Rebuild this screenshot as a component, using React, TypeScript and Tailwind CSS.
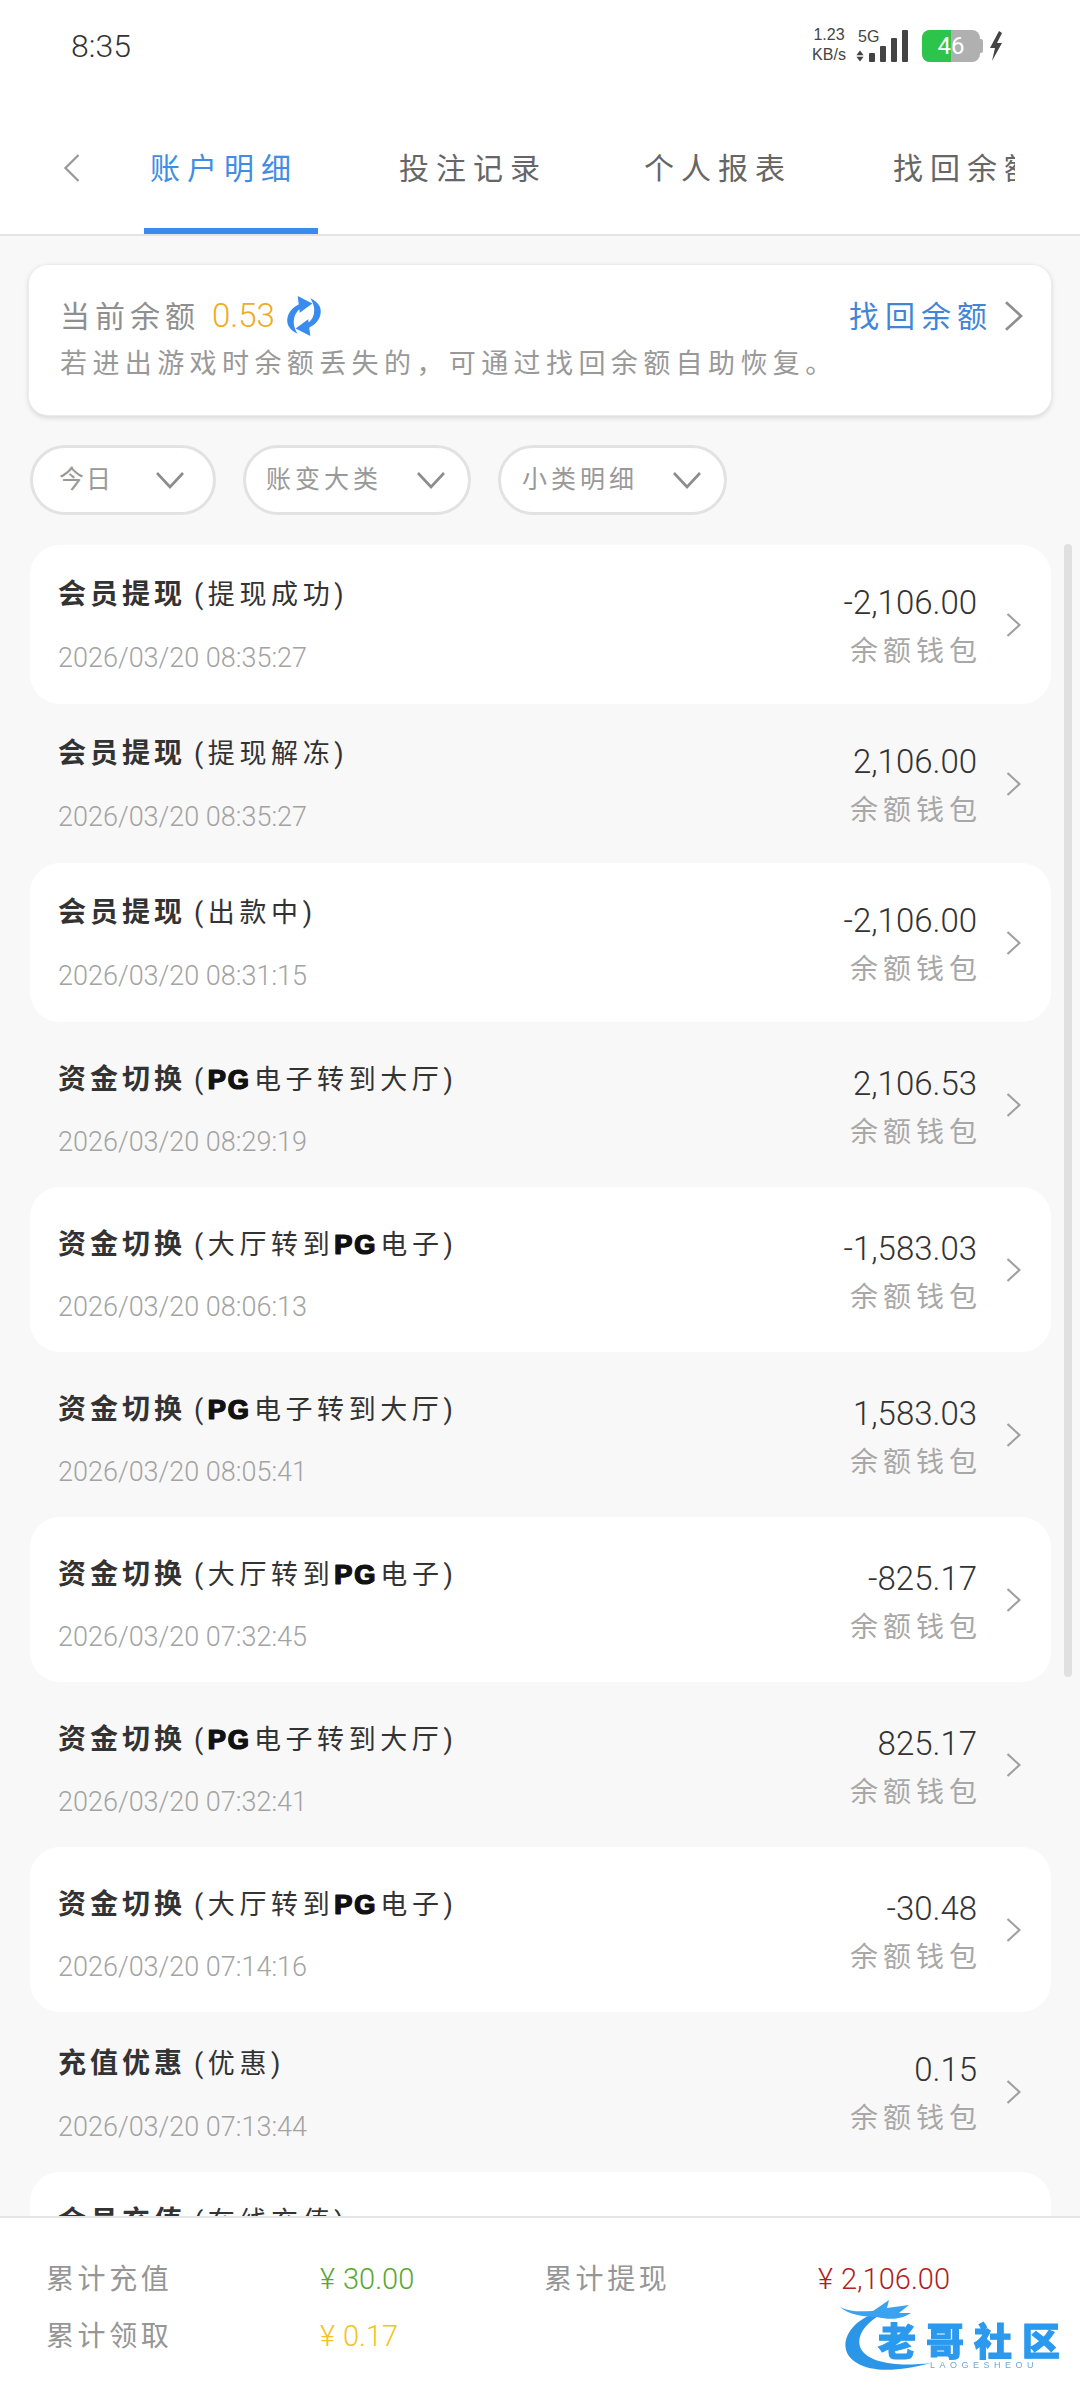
import React from "react";

const CJK = "font-['Roboto','Noto_Sans_CJK_SC',sans-serif]";

function PG() {
  return <span className="font-['Liberation_Sans',sans-serif] font-bold text-[#111] text-[27px] tracking-[2px] [-webkit-text-stroke:1.2px_#111] [text-shadow:-1px_0_#35d5e0,1px_0_#e23a9a]">PG</span>;
}

function Chevron({ className }: { className: string }) {
  return (
    <svg viewBox="0 0 15 24" className={className} fill="none" stroke="currentColor" strokeWidth="2.2">
      <path d="M1.5 1 L13.5 12 L1.5 23" strokeLinejoin="miter" />
    </svg>
  );
}

function Down() {
  return (
    <svg viewBox="0 0 28 17" className="w-[28px] h-[17px] text-[#8c8c8c]" fill="none" stroke="currentColor" strokeWidth="2.6">
      <path d="M1 1 L14 15 L27 1" />
    </svg>
  );
}

type Row = {
  title: string;
  sub: React.ReactNode;
  date?: string;
  amount?: string;
  white: boolean;
  h: string;
  titlePad: string;
  datePad: string;
  amountPad: string;
};

const h159 = { h: "h-[159px]", titlePad: "pt-[30px]", datePad: "mt-[23px]", amountPad: "pt-[38px]" };
const h165 = { h: "h-[165px]", titlePad: "pt-[38px]", datePad: "mt-[22px]", amountPad: "pt-[42px]" };
const h160 = { h: "h-[160px]", titlePad: "pt-[32px]", datePad: "mt-[23px]", amountPad: "pt-[38px]" };
const h212 = { h: "h-[212px]", titlePad: "pt-[30px]", datePad: "mt-[23px]", amountPad: "pt-[38px]" };

const hallToPg = (
  <>(<PG /><span className="ml-[3px]">电子转到大厅</span>)</>
);
const pgToHall = (
  <>(大厅转到<PG /><span className="ml-[3px]">电子</span>)</>
);

const rows: Row[] = [
  { title: "会员提现", sub: "(提现成功)", date: "2026/03/20 08:35:27", amount: "-2,106.00", white: true, ...h159 },
  { title: "会员提现", sub: "(提现解冻)", date: "2026/03/20 08:35:27", amount: "2,106.00", white: false, ...h159 },
  { title: "会员提现", sub: "(出款中)", date: "2026/03/20 08:31:15", amount: "-2,106.00", white: true, ...h159 },
  { title: "资金切换", sub: hallToPg, date: "2026/03/20 08:29:19", amount: "2,106.53", white: false, ...h165 },
  { title: "资金切换", sub: pgToHall, date: "2026/03/20 08:06:13", amount: "-1,583.03", white: true, ...h165 },
  { title: "资金切换", sub: hallToPg, date: "2026/03/20 08:05:41", amount: "1,583.03", white: false, ...h165 },
  { title: "资金切换", sub: pgToHall, date: "2026/03/20 07:32:45", amount: "-825.17", white: true, ...h165 },
  { title: "资金切换", sub: hallToPg, date: "2026/03/20 07:32:41", amount: "825.17", white: false, ...h165 },
  { title: "资金切换", sub: pgToHall, date: "2026/03/20 07:14:16", amount: "-30.48", white: true, ...h165 },
  { title: "充值优惠", sub: "(优惠)", date: "2026/03/20 07:13:44", amount: "0.15", white: false, ...h160 },
  { title: "会员充值", sub: "(在线充值)", white: true, ...h212 },
];

function ListRow({ r }: { r: Row }) {
  return (
    <div className={`${r.h} shrink-0 rounded-[30px] flex pl-[28px] pr-[30px] ${r.white ? "bg-white" : ""}`}>
      <div className={`flex-1 ${r.titlePad}`}>
        <div className="h-[40px] flex items-center whitespace-nowrap text-[#333]">
          <span className="font-bold text-[28px] tracking-[4px]">{r.title}</span>
          <span className="text-[27px] tracking-[4.6px] ml-[8px]">{r.sub}</span>
        </div>
        {r.date && (
          <div className={`${r.datePad} h-[40px] leading-[40px] text-[27px] font-light text-[#a3a3a3]`}>{r.date}</div>
        )}
      </div>
      {r.amount && (
        <>
          <div className={`flex flex-col items-end ${r.amountPad}`}>
            <div className="h-[40px] leading-[40px] text-[33px] font-light text-[#333]">{r.amount}</div>
            <div className="h-[40px] leading-[40px] mt-[9px] text-[28px] tracking-[5px] -mr-[5px] text-[#a8a8a8]">余额钱包</div>
          </div>
          <div className="ml-[29px] flex items-center">
            <Chevron className="w-[15px] h-[24px] text-[#a0a0a0]" />
          </div>
        </>
      )}
    </div>
  );
}

function Filter({ label, w, track, pad, gap }: { label: string; w: string; track: string; pad: string; gap: string }) {
  return (
    <div className={`${w} h-[70px] shrink-0 rounded-[35px] bg-white border-[3px] border-[#e2e2e2] flex items-center ${pad} ${gap}`}>
      <span className={`text-[25px] text-[#999] ${track} whitespace-nowrap`}>{label}</span>
      <Down />
    </div>
  );
}

function Logo() {
  return (
    <div className="absolute left-[839px] top-[2299px] w-[225px] h-[74px] pointer-events-none blur-[0.5px]">
      <svg viewBox="0 0 225 74" className="absolute inset-0 w-full h-full">
        <path d="M42 12 C6 22 -4 52 18 64 C34 74 62 72 92 64 C58 68 30 64 22 50 C16 38 26 24 44 14 Z" fill="#2b95e8" />
        <path d="M1 8 C14 14 24 12 34 12 L50 1 L48 9 L70 6 L60 14 L72 14 C60 22 48 20 38 18 C26 18 10 16 1 8 Z" fill="#3aa2ee" />
      </svg>
      <div className="absolute left-[39px] top-[24px] text-[38px] leading-[38px] font-black whitespace-nowrap tracking-[10px] text-[#2a99ee] [-webkit-text-stroke:1px_#2a99ee]">老哥社区</div>
      <div className="absolute left-[91px] top-[61px] text-[9px] leading-[11px] tracking-[4.5px] text-[#6aa9d8] whitespace-nowrap font-['Liberation_Sans',sans-serif]">LAOGESHEOU</div>
    </div>
  );
}

export default function App() {
  return (
    <div className={`relative w-[1080px] h-[2400px] overflow-hidden bg-[#f8f8f8] flex flex-col ${CJK}`}>
      {/* status + tab header */}
      <header className="bg-white h-[236px] shrink-0 border-b-2 border-[#e4e4e4] flex flex-col">
        <div className="h-[92px] flex items-center justify-between pl-[71px] pr-[77px] shrink-0">
          <span className="text-[32px] font-light text-[#333]">8:35</span>
          <div className="flex items-center h-[36px] -mt-[2px]">
            <div className="flex flex-col items-center text-[16px] leading-[20px] text-[#444] font-['Liberation_Sans',sans-serif] w-[38px]">
              <span>1.23</span>
              <span>KB/s</span>
            </div>
            <div className="ml-[8px] flex flex-col items-start w-[24px] text-[16px] leading-[20px] text-[#444] font-['Liberation_Sans',sans-serif]">
              <span className="ml-[2px]">5G</span>
              <svg viewBox="0 0 10 14" className="w-[8px] h-[14px] mt-[2px]" fill="#444"><path d="M5 0 L9.5 6 H0.5 Z M5 14 L0.5 8 H9.5 Z" /></svg>
            </div>
            <div className="flex items-end gap-[5px] h-[32px] -ml-[11px] mt-[2px]">
              <span className="w-[6px] h-[9px] rounded-[1px] bg-[#444]" />
              <span className="w-[6px] h-[16px] rounded-[1px] bg-[#444]" />
              <span className="w-[6px] h-[24px] rounded-[1px] bg-[#444]" />
              <span className="w-[6px] h-[32px] rounded-[1px] bg-[#444]" />
            </div>
            <div className="ml-[14px] relative w-[58px] h-[32px] mt-[2px] rounded-[8px] overflow-hidden bg-[#b0b0b0] flex">
              <div className="w-[29px] h-full bg-[#2cc44a]" />
              <span className="absolute inset-0 flex items-center justify-center text-[24px] font-normal text-white">46</span>
            </div>
            <span className="w-[3px] h-[14px] mt-[2px] bg-[#b0b0b0] rounded-r-[2px]" />
            <svg viewBox="0 0 14 30" className="ml-[6px] mt-[2px] w-[14px] h-[30px]" fill="#444"><path d="M10 0 L1 17 H6 L3 30 L13 12 H8 L13 2 Z" /></svg>
          </div>
        </div>
        <nav className="flex-1 flex items-stretch relative">
          <div className="w-[144px] flex items-center pl-[62px] shrink-0 pt-[16px] pb-[6px]">
            <svg viewBox="0 0 20 30" className="w-[20px] h-[28px] text-[#999]" fill="none" stroke="currentColor" strokeWidth="2.4"><path d="M17 1 L3 15 L17 29" /></svg>
          </div>
          <div className="w-[174px] shrink-0 border-b-[6px] border-[#3a8bee] pl-[6px] pt-[16px] flex items-center text-[30px] tracking-[7px] text-[#3f8de4] whitespace-nowrap">账户明细</div>
          <div className="w-[81px] shrink-0" />
          <div className="w-[245px] shrink-0 flex items-center pt-[16px] pb-[6px] text-[30px] tracking-[7px] text-[#666] whitespace-nowrap">投注记录</div>
          <div className="w-[249px] shrink-0 flex items-center pt-[16px] pb-[6px] text-[30px] tracking-[7px] text-[#666] whitespace-nowrap">个人报表</div>
          <div className="w-[122px] shrink-0 overflow-hidden flex items-center pt-[16px] pb-[6px] text-[30px] tracking-[7px] text-[#666] whitespace-nowrap">找回余额</div>
        </nav>
      </header>

      {/* balance card */}
      <section className="mx-[28px] mt-[28px] h-[152px] shrink-0 rounded-[20px] bg-white border border-[#ececec] shadow-[0_2px_5px_rgba(0,0,0,0.13)] pl-[31px] pr-[28px] pt-[29px]">
        <div className="flex items-center h-[44px]">
          <span className="text-[30px] tracking-[5px] text-[#8f8f8f]">当前余额</span>
          <span className="ml-[12px] text-[33px] font-light text-[#f0ab24]">0.53</span>
          <svg viewBox="0 0 38 40" className="ml-[9px] w-[40px] h-[42px]" fill="#3a8bee">
            <path d="M14 9 C5 13 1 22 4 29 C6 33 9 35 13 37 C9 31 8 24 11 18 C13 15 15 13 18 12 Z" />
            <path d="M13 1 L27 8 L15 17 Z" />
            <g transform="rotate(180 19 20)">
              <path d="M14 9 C5 13 1 22 4 29 C6 33 9 35 13 37 C9 31 8 24 11 18 C13 15 15 13 18 12 Z" />
              <path d="M13 1 L27 8 L15 17 Z" />
            </g>
          </svg>
          <span className="ml-auto text-[30px] tracking-[6px] text-[#3f86d8]">找回余额</span>
          <Chevron className="ml-[11px] w-[19px] h-[30px] text-[#8f8f8f]" />
        </div>
        <div className="mt-[6px] text-[27px] leading-[40px] tracking-[5.4px] text-[#999] whitespace-nowrap">若进出游戏时余额丢失的，可通过找回余额自助恢复。</div>
      </section>

      {/* filters */}
      <div className="mx-[30px] mt-[29px] flex gap-[27px] shrink-0">
        <Filter label="今日" w="w-[186px]" track="tracking-[2px]" pad="pl-[26px]" gap="gap-[43px]" />
        <Filter label="账变大类" w="w-[228px]" track="tracking-[4px]" pad="pl-[20px]" gap="gap-[35px]" />
        <Filter label="小类明细" w="w-[229px]" track="tracking-[4px]" pad="pl-[21px]" gap="gap-[35px]" />
      </div>

      {/* list */}
      <main className="ml-[30px] w-[1021px] mt-[30px] flex flex-col flex-1 min-h-0 overflow-hidden">
        {rows.map((r, i) => (
          <ListRow key={i} r={r} />
        ))}
      </main>

      {/* summary */}
      <footer className="h-[184px] shrink-0 bg-white border-t-2 border-[#e6e6e6] pl-[46px] pt-[33px] grid grid-cols-[274px_224px_274px_1fr] auto-rows-[57px] items-center">
        <span className="text-[28px] tracking-[3.6px] text-[#969696]">累计充值</span>
        <span className="text-[29px] font-light text-[#58a832]"><span className="mr-[8px]">¥</span>30.00</span>
        <span className="text-[28px] tracking-[3.6px] text-[#969696]">累计提现</span>
        <span className="text-[29px] font-light text-[#b01e20]"><span className="mr-[8px]">¥</span>2,106.00</span>
        <span className="text-[28px] tracking-[3.6px] text-[#969696]">累计领取</span>
        <span className="text-[29px] font-light text-[#f3c322]"><span className="mr-[8px]">¥</span>0.17</span>
      </footer>

      <Logo />
      <div className="absolute left-[1064px] top-[544px] w-[8px] h-[1133px] rounded-full bg-[#e0e0e0]" />
    </div>
  );
}
